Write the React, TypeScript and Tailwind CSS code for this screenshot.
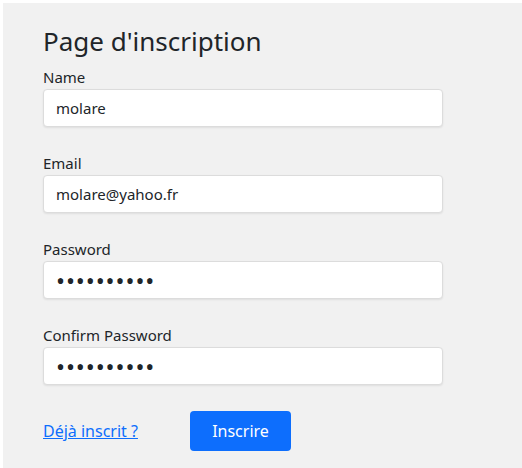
import { useState } from 'react';

function Field({ label, type, value, onChange }: { label: string; type: string; value: string; onChange: (v: string) => void }) {
  const isPassword = type === 'password';
  return (
    <div className="mb-[27px]">
      <label className="block text-[15px] leading-[19px] mb-[2px] text-[#212529]">{label}</label>
      <input
        type={type}
        value={value}
        onChange={(e) => onChange(e.target.value)}
        className={
          isPassword
            ? 'w-[400px] h-[38px] px-[12px] text-[24px] leading-[36px] tracking-[0.9px] text-[#212529] bg-white border border-[#dcdcdc] rounded-[4px] shadow-[0_1px_2px_rgba(0,0,0,0.08)] outline-none'
            : 'w-[400px] h-[38px] px-[12px] text-[15px] text-[#212529] bg-white border border-[#dcdcdc] rounded-[4px] shadow-[0_1px_2px_rgba(0,0,0,0.08)] outline-none'
        }
      />
    </div>
  );
}

export default function App() {
  const [name, setName] = useState('molare');
  const [email, setEmail] = useState('molare@yahoo.fr');
  const [password, setPassword] = useState('motdepasse');
  const [confirm, setConfirm] = useState('motdepasse');

  return (
    <div className="min-h-[468px] bg-white pl-[3px] pt-[3px] flex" style={{ fontFamily: '"Noto Sans", "Open Sans", sans-serif' }}>
      <main className="flex-1 bg-[#f1f1f1] pl-[40px] pt-[20px]">
        <h1 className="text-[26px] leading-[36px] mb-[9px] text-[#212529]">Page d'inscription</h1>
        <Field label="Name" type="text" value={name} onChange={setName} />
        <Field label="Email" type="email" value={email} onChange={setEmail} />
        <Field label="Password" type="password" value={password} onChange={setPassword} />
        <Field label="Confirm Password" type="password" value={confirm} onChange={setConfirm} />
        <div className="flex items-center -mt-[1px]">
          <a href="#" className="text-[16px] text-[#0d6efd] underline w-[147px]">Déjà inscrit ? </a>
          <button className="w-[101px] h-[40px] bg-[#0d6efd] text-white text-[16px] rounded-[4px]">
            Inscrire
          </button>
        </div>
      </main>
    </div>
  );
}
